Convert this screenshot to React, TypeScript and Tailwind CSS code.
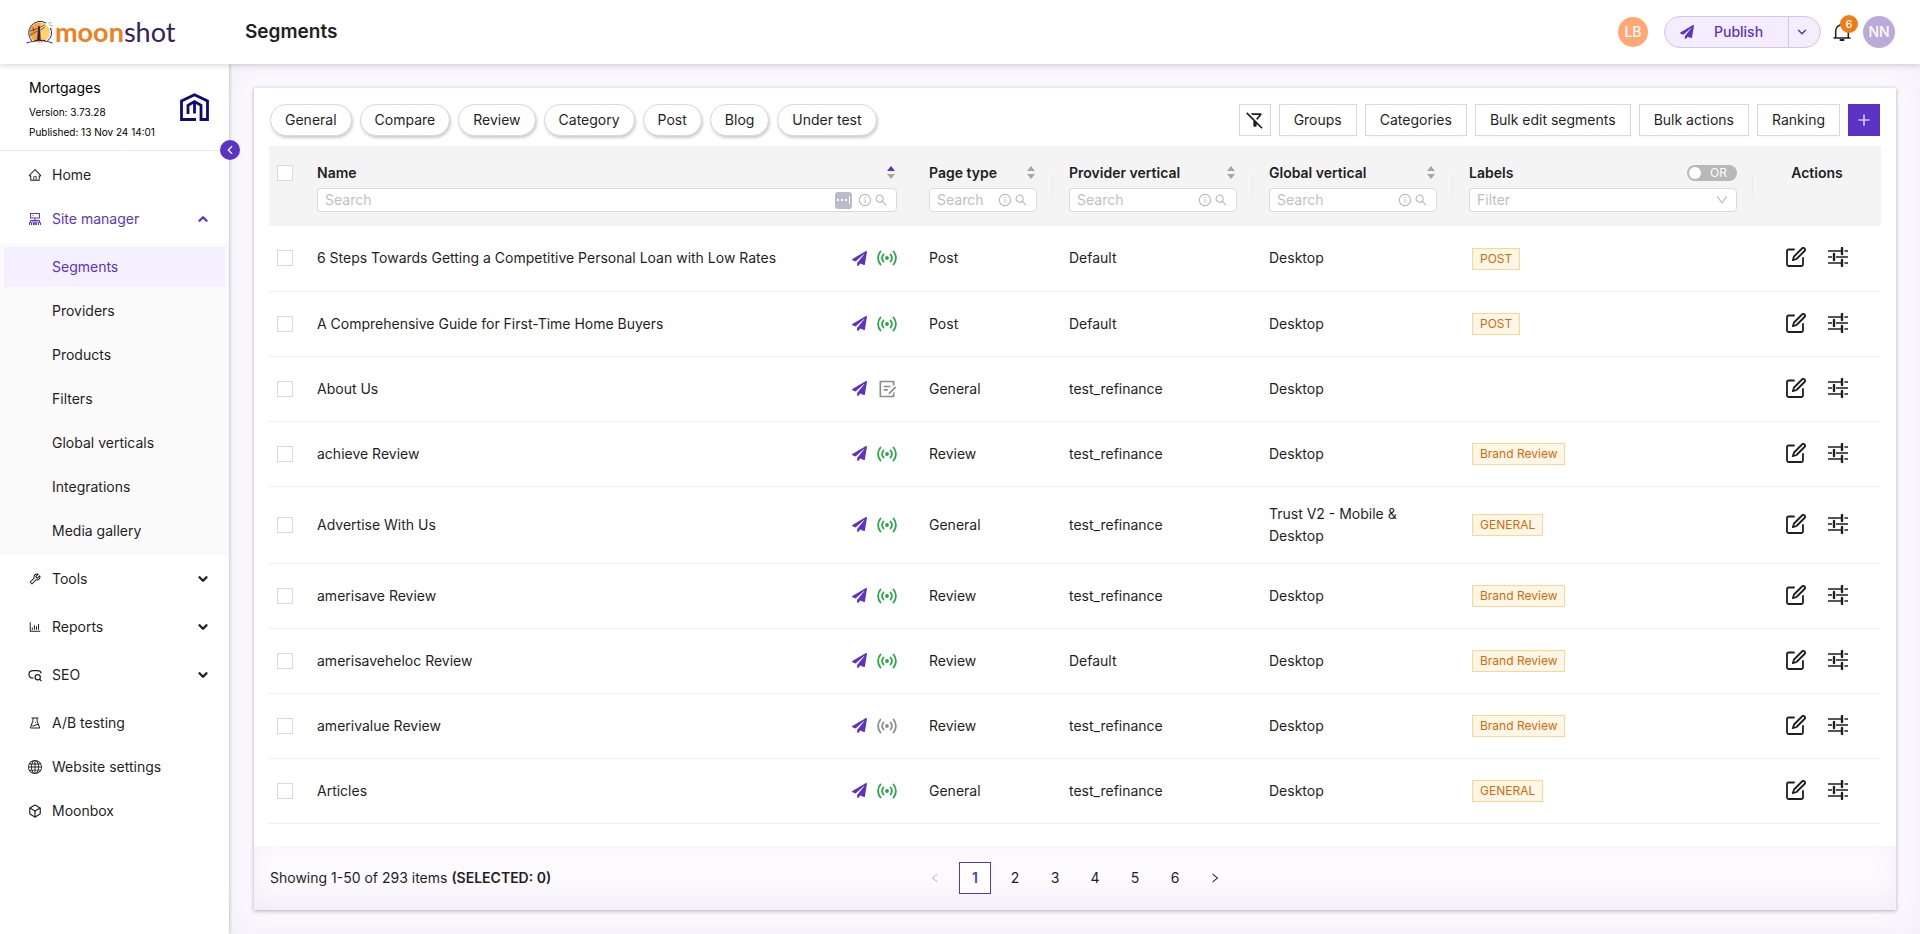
import { useState } from 'react';
import type { ReactNode } from 'react';
import {
  AiOutlineBarChart,
  AiOutlineDown,
  AiOutlineExperiment,
  AiOutlineHome,
  AiOutlineInfoCircle,
  AiOutlineLeft,
  AiOutlinePlus,
  AiOutlineRight,
  AiOutlineSearch,
  AiOutlineTool,
} from 'react-icons/ai';
import { BsGlobe } from 'react-icons/bs';
import { FaPaperPlane } from 'react-icons/fa';
import { FiBox, FiChevronDown, FiChevronLeft, FiChevronUp } from 'react-icons/fi';
import { MdOutlineFilterAltOff } from 'react-icons/md';
import { RiDraftLine } from 'react-icons/ri';

type Status = 'live' | 'draft' | 'offline';

type Segment = {
  name: string;
  pageType: string;
  provider: string;
  vertical: string;
  label?: string;
  status: Status;
};

const SEGMENTS: Segment[] = [
  { name: '6 Steps Towards Getting a Competitive Personal Loan with Low Rates', pageType: 'Post', provider: 'Default', vertical: 'Desktop', label: 'POST', status: 'live' },
  { name: 'A Comprehensive Guide for First-Time Home Buyers', pageType: 'Post', provider: 'Default', vertical: 'Desktop', label: 'POST', status: 'live' },
  { name: 'About Us', pageType: 'General', provider: 'test_refinance', vertical: 'Desktop', status: 'draft' },
  { name: 'achieve Review', pageType: 'Review', provider: 'test_refinance', vertical: 'Desktop', label: 'Brand Review', status: 'live' },
  { name: 'Advertise With Us', pageType: 'General', provider: 'test_refinance', vertical: 'Trust V2 - Mobile & Desktop', label: 'GENERAL', status: 'live' },
  { name: 'amerisave Review', pageType: 'Review', provider: 'test_refinance', vertical: 'Desktop', label: 'Brand Review', status: 'live' },
  { name: 'amerisaveheloc Review', pageType: 'Review', provider: 'Default', vertical: 'Desktop', label: 'Brand Review', status: 'live' },
  { name: 'amerivalue Review', pageType: 'Review', provider: 'test_refinance', vertical: 'Desktop', label: 'Brand Review', status: 'offline' },
  { name: 'Articles', pageType: 'General', provider: 'test_refinance', vertical: 'Desktop', label: 'GENERAL', status: 'live' },
];

const QUICK_FILTERS = ['General', 'Compare', 'Review', 'Category', 'Post', 'Blog', 'Under test'];
const TOOLBAR_ACTIONS = ['Groups', 'Categories', 'Bulk edit segments', 'Bulk actions', 'Ranking'];
const SITE_MANAGER_LINKS = ['Segments', 'Providers', 'Products', 'Filters', 'Global verticals', 'Integrations', 'Media gallery'];
const PAGES = [1, 2, 3, 4, 5, 6];

const MoonLogo = () => (
  <svg viewBox="0 0 54 46" className="h-[23px] w-[27px]" aria-hidden="true">
    <circle cx="27" cy="23" r="20" fill="#f6a833" />
    <path d="M29 4a20 20 0 0 1 11 34H29Z" fill="#ffd56b" />
    <path d="M12 40A23 23 0 0 1 40 4M49 14a23 23 0 0 1-6 26" fill="none" stroke="#35205c" strokeWidth="2" />
    <path d="M1 44q8-3 14-3 6-3 9-2 3-2 6 0 6-1 10 2 6 0 13 3" fill="none" stroke="#35205c" strokeWidth="2.2" />
    <path d="M22 39 24.5 10h3l2 29z" fill="#35205c" />
    <path d="M9 20l16-6 12-6M8 28l15-8M14 13l2 8M38 12l-9 6" fill="none" stroke="#35205c" strokeWidth="1.4" />
    <path d="M44 3l2 2M49 2l1 2M47 8l2 1M51 9l2 1M50 14l1 1" stroke="#35205c" strokeWidth="1.4" />
  </svg>
);

const SiteMark = () => (
  <svg viewBox="0 0 29 28" className="h-7 w-[29px]" fill="none" stroke="#0b0b7e" strokeWidth="2.8" aria-hidden="true">
    <path d="M16 26.5H1.5V8L14.5 1.8 27.5 8v18.5H21V12.2l-6.5-3.6L8 12.2V21" />
    <path d="M14.5 8.5V20.5" />
  </svg>
);

const SitemapIcon = () => (
  <svg viewBox="0 0 14 14" className="h-3.5 w-3.5" fill="none" stroke="currentColor" aria-hidden="true">
    <rect x="2.5" y="1.5" width="9" height="4.5" />
    <path d="M4.5 3.7h1M7 6v7M2.5 10V8.5h9V10M4.8 8.5 5.5 13M9.2 8.5 8.5 13" />
    <path d="M1.5 13v-2.5h2V13M10.5 13v-2.5h2V13M6 13v-2h2v2" />
  </svg>
);

const SeoIcon = () => (
  <svg viewBox="0 0 14 14" className="h-3.5 w-3.5" fill="none" stroke="currentColor" strokeWidth="1.2" aria-hidden="true">
    <path d="M5.5 10.2H4.8C2.5 9.9 1 8.4 1 6.4 1 4 2.8 2.7 5 2.7h4.6c1.9 0 3.2 1 3.6 2.6" />
    <circle cx="9.7" cy="9.2" r="2.6" />
    <path d="m11.5 11.2 2 2" />
  </svg>
);

const BroadcastIcon = () => (
  <svg viewBox="0 0 20 16" className="h-4 w-5" fill="none" stroke="currentColor" strokeWidth="1.8" strokeLinecap="round" aria-hidden="true">
    <path d="M3.5 1.5a10 10 0 0 0 0 13M16.5 1.5a10 10 0 0 1 0 13M6.5 4.5a5.5 5.5 0 0 0 0 7M13.5 4.5a5.5 5.5 0 0 1 0 7" />
    <circle cx="10" cy="8" r="1.9" fill="currentColor" stroke="none" />
  </svg>
);

const EditIcon = () => (
  <svg viewBox="0 0 20 20" className="h-5 w-5" fill="none" stroke="currentColor" strokeWidth="1.8" strokeLinecap="round" strokeLinejoin="round" aria-hidden="true">
    <path d="M8 2.5H2.5A1.5 1.5 0 0 0 1 4v13.5A1.5 1.5 0 0 0 2.5 19h13a1.5 1.5 0 0 0 1.5-1.5V11" />
    <path d="M6.8 13.2 8 9.5l8-8a1.7 1.7 0 0 1 2.5 2.5l-8 8z" />
  </svg>
);

const TuneIcon = () => (
  <svg viewBox="0 0 20 20" className="h-5 w-5" fill="none" stroke="currentColor" strokeWidth="1.7" aria-hidden="true">
    <path d="M0 4h14M16.5 4H20M0 10h4M8 10h12M0 16h14M16.5 16H20" />
    <path d="M14 1v6M6 7v6M14 13v6" strokeWidth="2.4" strokeLinecap="round" />
  </svg>
);

const BellIcon = () => (
  <svg viewBox="0 0 18 20" className="h-5 w-[18px]" fill="none" stroke="#1f1f1f" strokeWidth="1.5" aria-hidden="true">
    <path d="M.5 16h17M2.7 16V9a6.3 6.3 0 0 1 12.6 0v7M9 2.5V.8" />
    <path d="M7.5 18h3" strokeWidth="2" strokeLinecap="round" />
  </svg>
);

const SortArrows = ({ active = false }: { active?: boolean }) => (
  <svg viewBox="0 0 8 14" className="h-3.5 w-2" fill="#a6a6a6" aria-hidden="true">
    <path d="M4 0 8 5H0z" className={active ? 'fill-[#5b34c6]' : ''} />
    <path d="M0 8h8l-4 5z" />
  </svg>
);

const NavLink = ({ icon, label }: { icon: ReactNode; label: string }) => (
  <a href="#" className="flex h-10 items-center gap-2.5 pl-7 text-sm">
    {icon}
    {label}
  </a>
);

const NavGroup = ({ icon, label, open = false }: { icon: ReactNode; label: string; open?: boolean }) => (
  <button type="button" aria-expanded={open} className={`flex h-10 w-full items-center gap-2.5 pl-7 pr-[19px] text-sm ${open ? 'text-[#5b34c6]' : ''}`}>
    {icon}
    <span className="flex-1 text-left">{label}</span>
    {open ? <FiChevronUp size={14} strokeWidth={4} /> : <FiChevronDown size={14} strokeWidth={4} />}
  </button>
);

const SearchHeader = ({ title, active = false, divider = true }: { title: string; active?: boolean; divider?: boolean }) => {
  const [value, setValue] = useState('');

  return (
    <th scope="col" className="relative px-4 pb-3.5 pt-4 text-left align-top font-semibold">
      <div className="flex h-[22px] items-center justify-between pr-0.5">
        <span>{title}</span>
        <button type="button" aria-label={`Sort by ${title}`}>
          <SortArrows active={active} />
        </button>
      </div>
      <label className="mt-1 flex h-6 items-center gap-0.5 rounded border border-[#d9d9d9] bg-white pl-[7px] pr-2 font-normal text-[#b5b5b5]">
        <input
          type="text"
          aria-label={`Search ${title}`}
          placeholder="Search"
          value={value}
          onChange={(e) => setValue(e.target.value)}
          className="min-w-0 flex-1 text-sm text-[#1f1f1f] outline-none placeholder:text-[#bfbfbf]"
        />
        {active && (
          <span className="mr-1 flex h-[17px] w-[17px] items-center justify-center gap-0.5 rounded-[3px] bg-[#b9bdcb]">
            <i className="h-0.5 w-0.5 bg-white" />
            <i className="h-0.5 w-0.5 bg-white" />
            <i className="h-0.5 w-0.5 bg-white" />
            <i className="h-2 w-px bg-white" />
          </span>
        )}
        <AiOutlineInfoCircle size={14} />
        <AiOutlineSearch size={14} />
      </label>
      {divider && <span className="absolute right-0 top-[29px] h-[22px] w-px bg-[#ebebeb]" />}
    </th>
  );
};

const Checkbox = ({ label }: { label: string }) => (
  <input type="checkbox" aria-label={label} className="block h-4 w-4 appearance-none border border-[#d9d9d9] bg-white checked:bg-[#5b34c6]" />
);

const StatusIcon = ({ status }: { status: Status }) => {
  if (status === 'draft') return <span className="flex w-5 justify-center text-[#8c8c8c]"><RiDraftLine size={20} /></span>;
  return (
    <span className={status === 'live' ? 'text-[#28a745]' : 'text-[#8c8c8c]'}>
      <BroadcastIcon />
    </span>
  );
};

const SegmentRow = ({ segment }: { segment: Segment }) => (
  <tr className="h-[65px] border-b border-[#f0f0f0]">
    <td className="pl-2">
      <Checkbox label={`Select ${segment.name}`} />
    </td>
    <td className="px-4">
      <div className="flex items-center justify-between">
        <span>{segment.name}</span>
        <span className="flex items-center gap-2.5">
          <FaPaperPlane size={15} className="text-[#5b34c6]" />
          <StatusIcon status={segment.status} />
        </span>
      </div>
    </td>
    <td className="px-4">{segment.pageType}</td>
    <td className="px-4">{segment.provider}</td>
    <td className="px-4 py-4">{segment.vertical}</td>
    <td className="px-4">
      {segment.label && (
        <span className="ml-[3px] inline-block border border-[#ffd591] bg-[#fff7e6] px-[7px] text-xs leading-5 text-[#d46b08]">{segment.label}</span>
      )}
    </td>
    <td className="pb-0.5">
      <div className="flex items-center justify-center gap-[22px]">
        <button type="button" aria-label={`Edit ${segment.name}`}>
          <EditIcon />
        </button>
        <button type="button" aria-label={`Configure ${segment.name}`}>
          <TuneIcon />
        </button>
      </div>
    </td>
  </tr>
);

const Header = () => (
  <header className="relative z-20 flex h-16 items-center bg-white pr-[25px] shadow-[0_1px_6px_rgba(0,0,0,0.18)]">
    <a href="#" aria-label="moonshot" className="flex w-[229px] items-center gap-0.5 pl-[26px]">
      <MoonLogo />
      <span className="font-['Lato',sans-serif] text-[27px] leading-8">
        <b className="text-[#ee8021]">moon</b>
        <span className="text-[#35205c]">shot</span>
      </span>
    </a>
    <h1 className="flex-1 pl-4 text-[19px] font-semibold">Segments</h1>
    <span className="mr-4 flex h-[30px] w-[30px] items-center justify-center rounded-full bg-[#ffa875] text-sm font-medium text-white">LB</span>
    <div className="flex h-8 overflow-hidden rounded-full border border-[#cfc6e6] bg-[#f3edff] text-[#5b34c6]">
      <button type="button" className="flex w-[123px] items-center gap-5 pl-[15px] text-sm font-medium">
        <FaPaperPlane size={14} />
        Publish
      </button>
      <button type="button" aria-label="More publish options" className="flex w-8 items-center border-l border-[#cfc6e6] pl-1.5">
        <FiChevronDown size={14} strokeWidth={2.5} />
      </button>
    </div>
    <button type="button" aria-label="6 notifications" className="relative mx-3">
      <BellIcon />
      <span className="absolute -top-[7px] left-[7px] flex h-[18px] w-[18px] items-center justify-center rounded-full bg-[#ee7d18] text-[11px] font-medium text-white">6</span>
    </button>
    <span className="flex h-8 w-8 items-center justify-center rounded-full bg-[#bcaadb] text-sm font-medium text-white">NN</span>
  </header>
);

const Sidebar = () => (
  <aside className="relative z-10 w-[229px] shrink-0 bg-white shadow-[1px_0_3px_rgba(0,0,0,0.2)]">
    <div className="flex h-[87px] items-center justify-between border-b border-[#ececec] pl-[29px] pr-5 text-black">
      <div className="pt-1">
        <p className="text-sm leading-6">Mortgages</p>
        <p className="mt-0.5 text-[10px] leading-5">Version: 3.73.28</p>
        <p className="text-[10px] leading-5">Published: 13 Nov 24 14:01</p>
      </div>
      <SiteMark />
    </div>
    <button type="button" aria-label="Collapse menu" className="absolute -right-[11px] top-[76px] flex h-5 w-5 items-center justify-center rounded-full bg-[#5b34c6] text-white">
      <FiChevronLeft size={14} />
    </button>
    <nav className="pt-1">
      <div className="flex flex-col gap-1">
        <NavLink icon={<AiOutlineHome size={14} />} label="Home" />
        <NavGroup icon={<SitemapIcon />} label="Site manager" open />
      </div>
      <ul className="mt-1 flex flex-col gap-1 bg-[#fafafa] py-1">
        {SITE_MANAGER_LINKS.map((label) => (
          <li key={label} className="px-1">
            <a href="#" className={`flex h-10 items-center pl-12 text-sm ${label === 'Segments' ? 'bg-[#f5f0ff] text-[#5b34c6]' : ''}`}>
              {label}
            </a>
          </li>
        ))}
      </ul>
      <div className="mt-1 flex flex-col gap-2">
        <NavGroup icon={<AiOutlineTool size={14} />} label="Tools" />
        <NavGroup icon={<AiOutlineBarChart size={14} />} label="Reports" />
        <NavGroup icon={<SeoIcon />} label="SEO" />
      </div>
      <div className="mt-2 flex flex-col gap-1">
        <NavLink icon={<AiOutlineExperiment size={14} />} label="A/B testing" />
        <NavLink icon={<BsGlobe size={14} />} label="Website settings" />
        <NavLink icon={<FiBox size={14} />} label="Moonbox" />
      </div>
    </nav>
  </aside>
);

const Toolbar = () => (
  <div className="flex items-center justify-between px-4 pb-2.5 pt-4">
    <div className="flex gap-2">
      {QUICK_FILTERS.map((label) => (
        <button key={label} type="button" className="h-8 rounded-full border border-[#d9d9d9] bg-white px-3.5 text-sm shadow-[1px_2px_3px_rgba(0,0,0,0.2)]">
          {label}
        </button>
      ))}
    </div>
    <div className="flex gap-2">
      <button type="button" aria-label="Clear filters" className="flex h-8 w-8 items-center justify-center border border-[#d9d9d9]">
        <MdOutlineFilterAltOff size={20} />
      </button>
      {TOOLBAR_ACTIONS.map((label) => (
        <button key={label} type="button" className="h-8 border border-[#d9d9d9] bg-white px-3.5 text-sm shadow-[0_2px_0_rgba(0,0,0,0.02)]">
          {label}
        </button>
      ))}
      <button type="button" aria-label="Add segment" className="flex h-8 w-8 items-center justify-center bg-[#5b34c6] text-white">
        <AiOutlinePlus size={16} />
      </button>
    </div>
  </div>
);

const Pagination = () => {
  const [page, setPage] = useState(1);

  return (
    <nav aria-label="Pagination" className="flex gap-2 text-sm">
      <button type="button" aria-label="Previous page" disabled={page === 1} className="flex h-8 w-8 items-center justify-center disabled:text-[#bfbfbf]">
        <AiOutlineLeft size={12} />
      </button>
      {PAGES.map((n) => (
        <button
          key={n}
          type="button"
          onClick={() => setPage(n)}
          className={`h-8 w-8 ${n === page ? 'border border-[#5b34c6] bg-white font-semibold text-[#5b34c6]' : ''}`}
        >
          {n}
        </button>
      ))}
      <button type="button" aria-label="Next page" className="flex h-8 w-8 items-center justify-center">
        <AiOutlineRight size={12} />
      </button>
    </nav>
  );
};

export default function App() {
  return (
    <div className="flex min-h-screen flex-col bg-white font-['Inter',sans-serif] text-sm leading-[22px] text-[#1f1f1f]">
      <Header />
      <div className="flex flex-1">
        <Sidebar />
        <main className="flex min-w-0 flex-1 flex-col bg-[#fcfaff] py-6 pl-[25px] pr-6 shadow-[inset_0_0_40px_rgba(60,40,90,0.06)]">
          <section className="flex flex-1 flex-col bg-white shadow-[0_1px_4px_rgba(0,0,0,0.3)]">
            <Toolbar />
            <div className="flex-1 px-[15px]">
              <table className="w-full table-fixed border-collapse">
                <colgroup>
                  <col className="w-8" />
                  <col />
                  <col className="w-[140px]" />
                  <col className="w-[200px]" />
                  <col className="w-[200px]" />
                  <col className="w-[300px]" />
                  <col className="w-32" />
                </colgroup>
                <thead className="bg-[#f4f4f4]">
                  <tr>
                    <th className="pl-2 pt-[19px] align-top">
                      <Checkbox label="Select all" />
                    </th>
                    <SearchHeader title="Name" active divider={false} />
                    <SearchHeader title="Page type" />
                    <SearchHeader title="Provider vertical" />
                    <SearchHeader title="Global vertical" />
                    <th scope="col" className="relative px-4 pb-3.5 pt-4 text-left align-top font-semibold">
                      <div className="flex h-[22px] items-center justify-between">
                        <span>Labels</span>
                        <button type="button" role="switch" aria-checked="false" aria-label="Match any label" className="flex h-4 w-[50px] items-center justify-between rounded-full bg-[#b8b8b8] pl-0.5 pr-2.5 text-xs font-normal text-white">
                          <span className="h-3 w-3 rounded-full bg-white" />
                          OR
                        </button>
                      </div>
                      <div className="relative mt-1">
                        <select aria-label="Filter labels" className="block h-6 w-full appearance-none rounded border border-[#d9d9d9] bg-white pl-[7px] text-sm font-normal leading-5 text-[#bfbfbf]">
                          <option>Filter</option>
                        </select>
                        <AiOutlineDown size={14} className="pointer-events-none absolute right-2 top-[5px] text-[#b5b5b5]" />
                      </div>
                      <span className="absolute right-0 top-[29px] h-[22px] w-px bg-[#ebebeb]" />
                    </th>
                    <th scope="col" className="pt-4 text-center align-top font-semibold">Actions</th>
                  </tr>
                </thead>
                <tbody>
                  {SEGMENTS.map((segment) => (
                    <SegmentRow key={segment.name} segment={segment} />
                  ))}
                </tbody>
              </table>
            </div>
            <footer className="grid h-16 grid-cols-[1fr_auto_1fr] items-center bg-[#fcfaff] px-4 shadow-[inset_0_-10px_24px_rgba(60,40,90,0.06)]">
              <p>
                Showing 1-50 of 293 items <b className="font-semibold">(SELECTED: 0)</b>
              </p>
              <Pagination />
            </footer>
          </section>
        </main>
      </div>
    </div>
  );
}
